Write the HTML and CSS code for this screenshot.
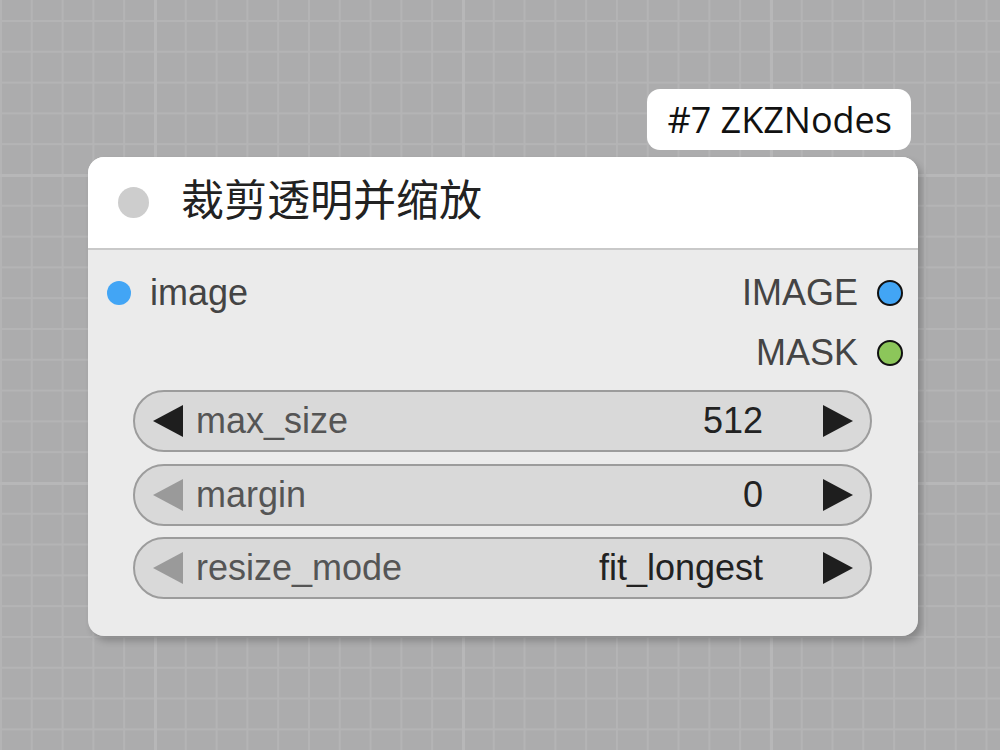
FILE: index.html
```html
<!DOCTYPE html>
<html lang="zh">
<head>
<meta charset="utf-8">
<title>裁剪透明并缩放</title>
<link rel="stylesheet" href="styles.css">
</head>
<body>
<div class="canvas">
  <div class="node">
    <div class="badge">#7 ZKZNodes</div>
    <div class="title">
      <span class="title-dot"></span>
      <span class="title-text">裁剪透明并缩放</span>
    </div>
    <div class="body">
      <div class="slot-row">
        <div class="slot-in"><span class="dot dot-in"></span><span class="slot-label">image</span></div>
        <div class="slot-out"><span class="slot-label">IMAGE</span><span class="dot dot-out dot-blue"></span></div>
      </div>
      <div class="slot-row">
        <div class="slot-in"></div>
        <div class="slot-out"><span class="slot-label">MASK</span><span class="dot dot-out dot-green"></span></div>
      </div>
      <div class="widgets">
        <div class="widget">
          <svg class="arrow" viewBox="0 0 30 32"><polygon points="30,0 30,32 0,16" class="arrow-dark"/></svg>
          <span class="w-label">max_size</span>
          <span class="w-value">512</span>
          <svg class="arrow arrow-r" viewBox="0 0 30 32"><polygon points="0,0 0,32 30,16" class="arrow-dark"/></svg>
        </div>
        <div class="widget">
          <svg class="arrow" viewBox="0 0 30 32"><polygon points="30,0 30,32 0,16" class="arrow-light"/></svg>
          <span class="w-label">margin</span>
          <span class="w-value">0</span>
          <svg class="arrow arrow-r" viewBox="0 0 30 32"><polygon points="0,0 0,32 30,16" class="arrow-dark"/></svg>
        </div>
        <div class="widget">
          <svg class="arrow" viewBox="0 0 30 32"><polygon points="30,0 30,32 0,16" class="arrow-light"/></svg>
          <span class="w-label">resize_mode</span>
          <span class="w-value">fit_longest</span>
          <svg class="arrow arrow-r" viewBox="0 0 30 32"><polygon points="0,0 0,32 30,16" class="arrow-dark"/></svg>
        </div>
      </div>
    </div>
  </div>
</div>
</body>
</html>
```
FILE: styles.css
```css
html, body {
  margin: 0;
  padding: 0;
}
body {
  width: 1000px;
  height: 750px;
  overflow: hidden;
  background-color: #acacad;
  background-image:
    linear-gradient(to right, #b7b7b8 0 3px, transparent 3px),
    linear-gradient(to bottom, #b7b7b8 0 3px, transparent 3px),
    linear-gradient(to right, #b4b4b5 0 2px, transparent 2px),
    linear-gradient(to bottom, #b4b4b5 0 2px, transparent 2px);
  background-size: 308px 308px, 308px 308px, 30.8px 30.8px, 30.8px 30.8px;
  background-position: 154px 0, 0 174px, 0 0, 0 20px;
  font-family: "Liberation Sans", Arial, sans-serif;
}
.canvas {
  position: relative;
  width: 1000px;
  height: 750px;
}
.node {
  position: absolute;
  left: 88px;
  top: 157px;
  width: 830px;
  border-radius: 16px;
  background: rgba(237, 237, 237, 0.96);
  box-shadow: 4px 5px 7px rgba(0, 0, 0, 0.22);
}
.badge {
  position: absolute;
  right: 7px;
  top: -68px;
  height: 61px;
  box-sizing: border-box;
  padding: 0 19px 0 20px;
  display: flex;
  align-items: center;
  background: #ffffff;
  border-radius: 13px;
  font-family: "Open Sans", "Noto Sans", sans-serif;
  font-size: 36px;
  color: #111111;
  white-space: nowrap;
  line-height: 1;
}
.title {
  height: 91px;
  display: flex;
  align-items: center;
  padding-left: 30px;
  background: #ffffff;
  border-radius: 16px 16px 0 0;
  border-bottom: 2px solid #c9c9c9;
}
.title-dot {
  width: 31px;
  height: 31px;
  border-radius: 50%;
  background: #cdcdcd;
  flex: none;
}
.title-text {
  margin-left: 32px;
  padding-bottom: 10px;
  font-family: "Noto Sans CJK SC", "Noto Sans", sans-serif;
  font-size: 43px;
  color: #222222;
  line-height: 1;
}
.body {
  padding: 13px 15px 37px 19px;
}
.slot-row {
  height: 60px;
  display: flex;
  align-items: center;
  justify-content: space-between;
}
.slot-in, .slot-out {
  display: flex;
  align-items: center;
}
.slot-label {
  font-size: 36px;
  color: #444444;
  line-height: 1;
}
.dot {
  border-radius: 50%;
  flex: none;
}
.dot-in {
  width: 24px;
  height: 24px;
  background: #42a5f5;
  margin-right: 19px;
}
.dot-out {
  width: 22px;
  height: 22px;
  border: 2px solid #111111;
  margin-left: 19px;
}
.dot-blue {
  background: #42a5f5;
}
.dot-green {
  background: #8cc65a;
}
.widgets {
  margin: 7px 31px 0 26px;
  display: flex;
  flex-direction: column;
  gap: 11.5px;
}
.widget {
  height: 62px;
  box-sizing: border-box;
  border: 2px solid #9c9c9c;
  border-radius: 31px;
  background: #d9d9d9;
  display: flex;
  align-items: center;
  padding: 0 17px 0 18px;
}
.arrow {
  width: 30px;
  height: 32px;
  flex: none;
}
.arrow-dark {
  fill: #1e1e1e;
}
.arrow-light {
  fill: #9a9a9a;
}
.w-label {
  margin-left: 13px;
  font-size: 36px;
  color: #555555;
  line-height: 1;
}
.w-value {
  margin-left: auto;
  font-size: 36px;
  color: #222222;
  line-height: 1;
}
.arrow-r {
  margin-left: 60px;
}
```
